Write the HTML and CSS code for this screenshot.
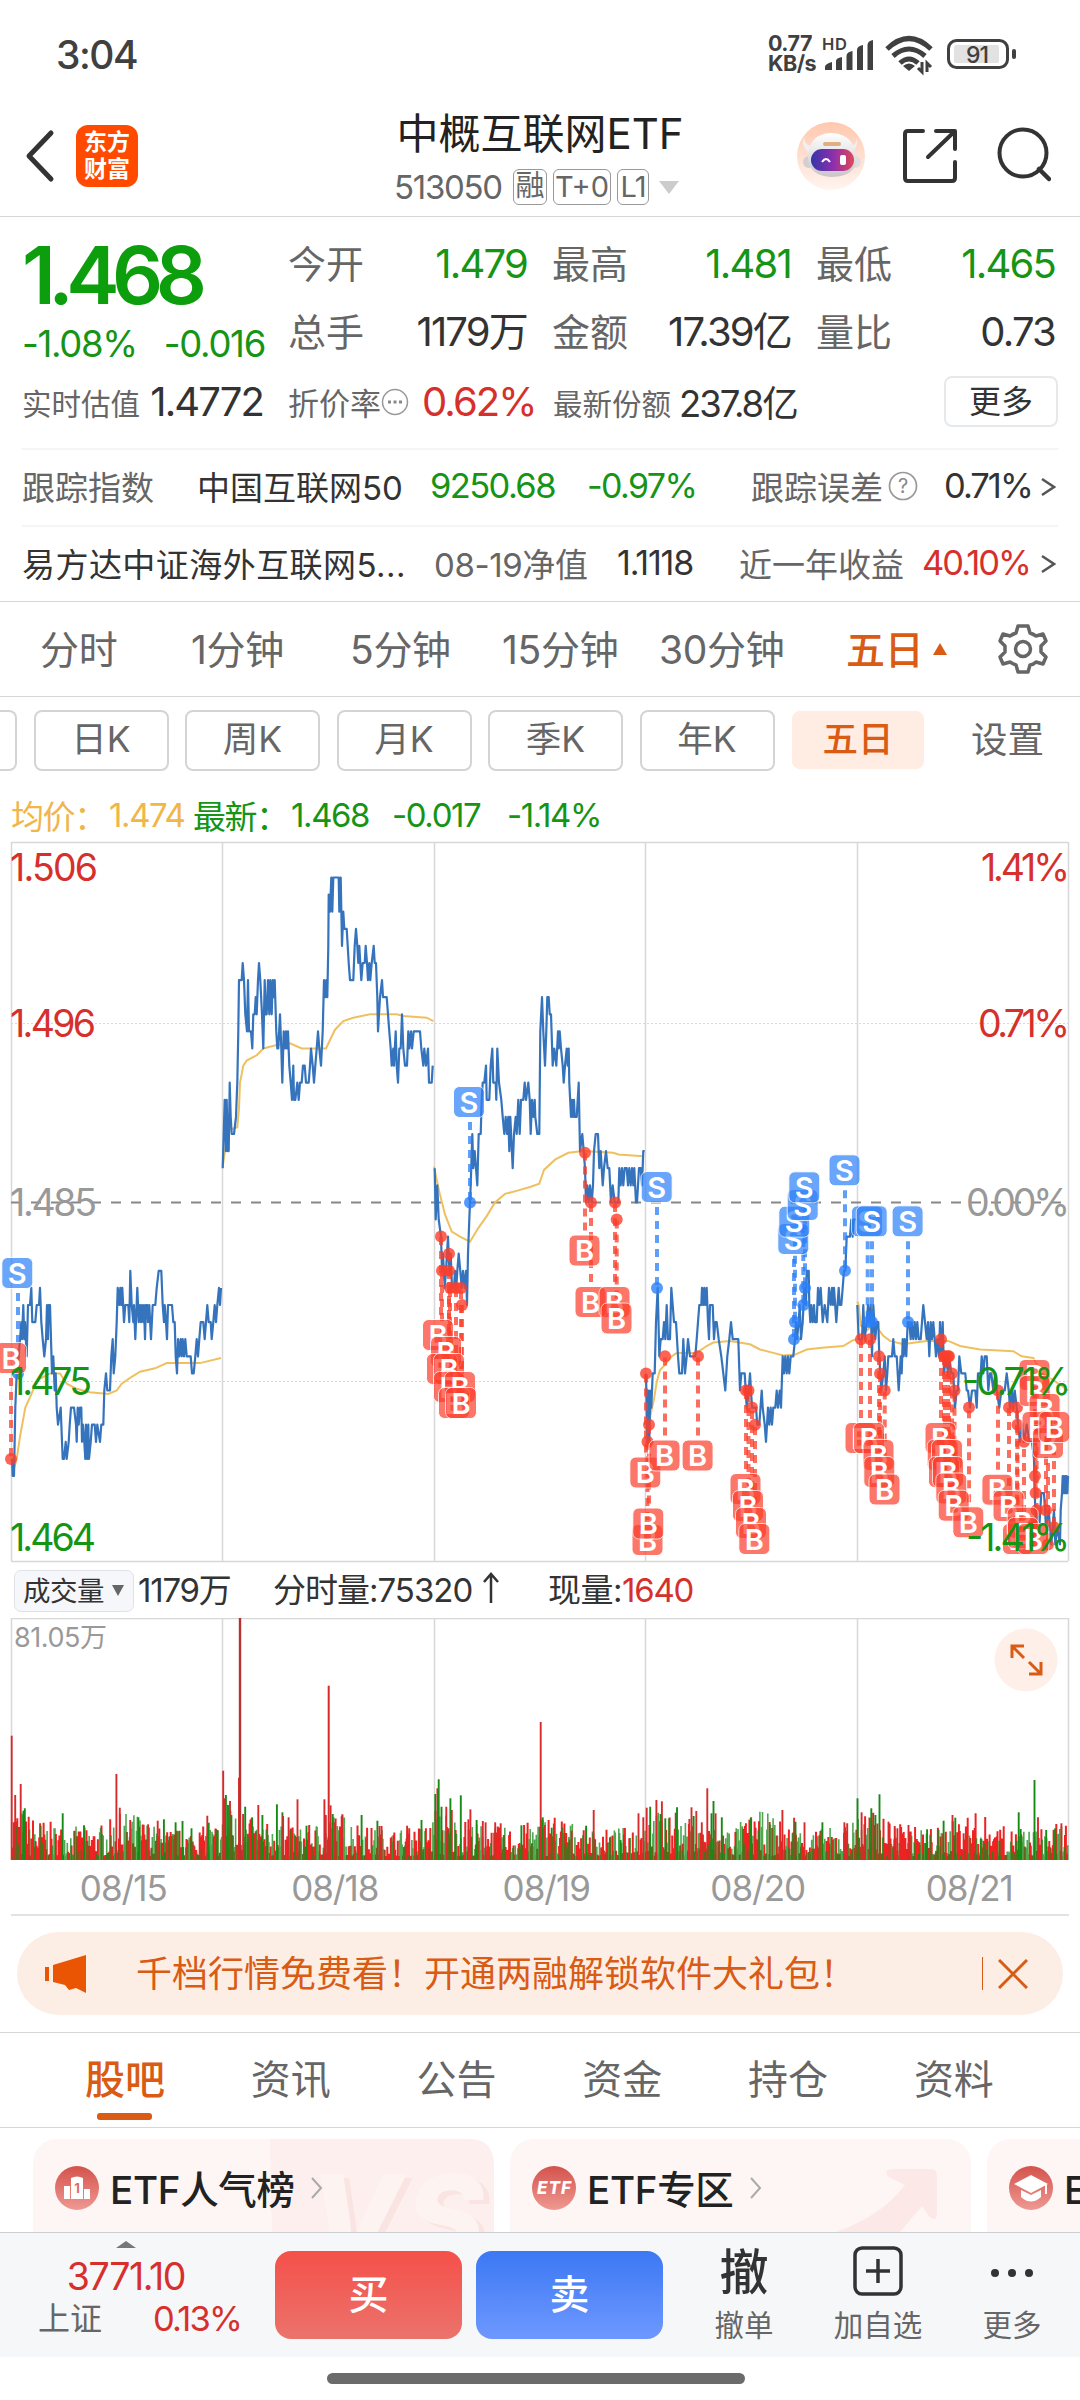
FILE: index.html
```html
<!DOCTYPE html>
<html lang="zh-CN">

<head>
    <meta charset="UTF-8">
    <meta name="viewport" content="width=device-width, initial-scale=1.0">
    <title>中概互联网ETF</title>
    <link rel="stylesheet" href="styles.css">
</head>

<body>
    <div class="status">
        <span class="clock">3:04</span>
        <div class="speed"><span>0.77</span><span>KB/s</span></div>
        <svg class="status-icons" width="200" height="44" viewBox="820 32 200 44">
            <text x="822" y="50" font-size="16.500" font-weight="600" textLength="25" fill="#404040">HD</text>
            <g fill="#404040">
                <path d="M825 76v-3q0-3 7-5v8zM836 76v-9q0-3 6-4v13zM846.500 76v-14q0-4 6-5v19zM857 76v-20q0-4 6-5v25zM867.500 76v-25q0-4 5.500-5v30z" transform="translate(0 -6)" />
            </g>
            <g fill="none" stroke="#404040" stroke-width="5">
                <path d="M887 49q22-21 44 0M893 56q16-14 32 0M900 63q9-8 18 0" />
            </g>
            <path d="M909 71l-6-5q6-5 12 0z" fill="#404040" />
            <path d="M922 62v10l-4-4M927 72v-9l4 4" fill="none" stroke="#404040" stroke-width="3" />
            <rect x="948.500" y="40.500" width="59" height="27" rx="8" fill="#fff" stroke="#404040" stroke-width="3" />
            <rect x="954" y="45" width="45" height="18" rx="2" fill="#e2e2e2" />
            <rect x="1012" y="49" width="4" height="10" rx="2" fill="#404040" />
            <text x="966" y="62.500" font-size="23" font-weight="500" textLength="23" fill="#404040">91</text>
        </svg>
    </div>

    <header class="header">
        <svg class="back" width="30" height="54" viewBox="0 0 30 54"><path d="M26 4L4 27l22 23" fill="none" stroke="#333" stroke-width="5" stroke-linecap="round" stroke-linejoin="round" /></svg>
        <div class="logo"><span>东方</span><span>财富</span></div>
        <div class="title">
            <div class="name">中概互联网<span>ETF</span></div>
            <div class="code"><span class="code-num">513050</span><i>融</i><i class="t0">T+0</i><i class="l1">L1</i><b class="down"></b></div>
        </div>
        <svg class="robot" width="68" height="68" viewBox="0 0 68 68">
            <defs>
                <linearGradient id="halo" x1="0" y1="0" x2="0" y2="1"><stop offset="0" stop-color="#ffc8ae" /><stop offset="1" stop-color="#fff5f0" /></linearGradient>
                <linearGradient id="visor" x1="0" y1="0" x2="1" y2="0"><stop offset="0" stop-color="#3535a8" /><stop offset=".5" stop-color="#8a2fae" /><stop offset="1" stop-color="#e04858" /></linearGradient>
                <linearGradient id="shell" x1="0" y1="0" x2="0" y2="1"><stop offset="0" stop-color="#fff" /><stop offset="1" stop-color="#c9c5cb" /></linearGradient>
            </defs>
            <circle cx="34" cy="34" r="34" fill="url(#halo)" />
            <path d="M14 24q-7-2-7-9q-4 10 6 16zM54 24q7-2 5-10q4 10-5 16z" fill="#f3eef0" />
            <circle cx="12" cy="40" r="6" fill="#d3ced3" /><circle cx="58" cy="40" r="6" fill="#e2dcdf" />
            <path d="M11 36Q11 12 34 11Q58 12 59 36Q60 54 35 55Q12 54 11 36z" fill="url(#shell)" />
            <rect x="14" y="27" width="43" height="22" rx="11" fill="url(#visor)" />
            <rect x="26" y="20" width="18" height="4" rx="2" fill="#dfae83" />
            <path d="M25 40q4-6 8 0" fill="none" stroke="#fff" stroke-width="2" /><rect x="43" y="33" width="6" height="10" rx="2" fill="#fff" />
        </svg>
        <svg class="share" width="54" height="54" viewBox="0 0 54 54"><path d="M20 2H5q-3 0-3 3v44q0 3 3 3h44q3 0 3-3V33M33 2h19v18M51 3L25 28" fill="none" stroke="#333" stroke-width="4" stroke-linecap="round" stroke-linejoin="round" /></svg>
        <svg class="search" width="54" height="56" viewBox="0 0 54 56"><circle cx="26" cy="26" r="23.500" fill="none" stroke="#333" stroke-width="4" /><path d="M42 42l10 10" stroke="#333" stroke-width="4.500" stroke-linecap="round" /></svg>
    </header>

    <section class="quote">
        <div class="quote-top">
            <div class="price">
                <div class="big">1.468</div>
                <div class="change"><span>-1.08%</span><span>-0.016</span></div>
            </div>
            <dl class="stats">
                <dt>今开</dt><dd class="green">1.479</dd><dt>最高</dt><dd class="green">1.481</dd><dt>最低</dt><dd class="green">1.465</dd>
                <dt>总手</dt><dd>1179万</dd><dt>金额</dt><dd>17.39亿</dd><dt>量比</dt><dd>0.73</dd>
            </dl>
        </div>
        <div class="estimate">
            <span class="lab">实时估值</span><span class="val">1.4772</span>
            <span class="lab rate">折价率<svg width="28" height="28" viewBox="0 0 28 28"><circle cx="14" cy="14" r="12.500" fill="none" stroke="#999" stroke-width="1.500" /><path d="M7 14h3M12.500 14h3M18 14h3" stroke="#888" stroke-width="3" /></svg></span><span class="val red">0.62%</span>
            <span class="lab">最新份额</span><span class="val">237.8亿</span>
            <button class="more">更多</button>
        </div>
        <div class="row index-row">
            <span class="grey">跟踪指数</span><span>中国互联网50</span><span class="green n1">9250.68</span><span class="green n2">-0.97%</span>
            <span class="grey">跟踪误差</span><svg width="30" height="30" viewBox="0 0 30 30"><circle cx="15" cy="15" r="13.500" fill="none" stroke="#999" stroke-width="1.700" /><text x="15" y="22" text-anchor="middle" font-size="20" fill="#888">?</text></svg><span class="n3">0.71%</span><svg class="gt" width="16" height="20" viewBox="0 0 16 20"><path d="M2 2l12 8-12 8" fill="none" stroke="#555" stroke-width="2.500" /></svg>
        </div>
        <div class="row fund-row">
            <span class="fund">易方达中证海外互联网5...</span><span class="grey nav">08-19净值</span><span class="n4">1.1118</span><span class="grey">近一年收益</span><span class="red n5">40.10%</span><svg class="gt" width="16" height="20" viewBox="0 0 16 20"><path d="M2 2l12 8-12 8" fill="none" stroke="#555" stroke-width="2.500" /></svg>
        </div>
    </section>

    <nav class="tabs">
        <span>分时</span><span>1分钟</span><span>5分钟</span><span>15分钟</span><span>30分钟</span><span class="on">五日</span><b class="up"></b>
        <svg width="50" height="52" viewBox="-25 -26 50 52"><path d="M-5-23H5L7-16Q10-15 13-13L20-15 23-8 18-3V3L23 8 20 15 13 13Q10 16 7 16L5 23H-5L-7 16Q-10 15-13 13L-20 15-23 8-18 3V-3L-23-8-20-15-13-13Q-10-15-7-16Z" fill="none" stroke="#666" stroke-width="3.500" stroke-linejoin="round" /><circle r="7.500" fill="none" stroke="#666" stroke-width="3.500" /></svg>
    </nav>
    <nav class="periods">
        <span class="cut"></span><span>日K</span><span>周K</span><span>月K</span><span>季K</span><span>年K</span><span class="on">五日</span><span class="set">设置</span>
    </nav>

    <div class="legend"><span class="avg">均价：</span><span class="avg">1.474</span><span>最新：</span><span>1.468</span><span>-0.017</span><span>-1.14%</span></div>

    <svg class="chart" id="chart" width="1080" height="722" viewBox="0 841 1080 722">
        <g class="frame">
            <path d="M11 842.500H1068M11 1561.500H1068M11.500 842V1561M222.500 842V1561M434.500 842V1561M645.500 842V1561M857.500 842V1561M1068.500 842V1561" />
            <path class="dots" d="M11 1023.500H1068M11 1381.500H1068" />
        </g>
        <path class="zero" d="M11 1202.500H1068" />
        <g id="lines"></g>
        <g id="marks"></g>
        <g class="axis">
            <text class="r" x="10" y="881" textLength="88">1.506</text>
            <text class="r" x="10" y="1037" textLength="86">1.496</text>
            <text class="z" x="10" y="1216" textLength="87">1.485</text>
            <text class="g" x="10" y="1395" textLength="82">1.475</text>
            <text class="g" x="10" y="1551" textLength="86">1.464</text>
            <text class="r" x="981" y="881" textLength="89">1.41%</text>
            <text class="r" x="978" y="1037" textLength="92">0.71%</text>
            <text class="z" x="966" y="1216" textLength="104">0.00%</text>
            <text class="g" x="962" y="1395" textLength="109">-0.71%</text>
            <text class="g" x="966" y="1551" textLength="104">-1.41%</text>
        </g>
    </svg>

    <div class="vol-head">
        <span class="select">成交量<b class="tri"></b></span><span class="total">1179万</span><span class="minute">分时量:75320<svg width="20" height="32" viewBox="0 0 20 32"><path d="M10 31V2M3 10l7-8 7 8" fill="none" stroke="#333" stroke-width="2.500" /></svg></span><span class="now">现量:<em class="red">1640</em></span>
    </div>
    <svg class="volume" width="1080" height="243" viewBox="0 1618 1080 243">
        <g class="frame"><path d="M11 1618.500H1068M11.500 1618V1860M222.500 1618V1860M434.500 1618V1860M645.500 1618V1860M857.500 1618V1860M1068.500 1618V1860" /></g>
        <g id="bars"></g>
        <text x="14" y="1647" font-size="27" textLength="93" fill="#999">81.05万</text>
        <circle cx="1026" cy="1660" r="31.500" fill="#fef0e8" />
        <path d="M1012 1658v-12h12M1012 1646l12 12M1041 1662v12h-12M1041 1674l-12-12" fill="none" stroke="#d95b14" stroke-width="3" />
    </svg>
    <div class="dates"><span>08/15</span><span>08/18</span><span>08/19</span><span>08/20</span><span>08/21</span></div>

    <div class="banner">
        <svg width="44" height="38" viewBox="0 0 44 38"><path d="M1 12h4v14H1zM9 10L42 0v38l-10-5-7 2-4-5-12-3z" fill="#ea5504" /></svg>
        <span>千档行情免费看！开通两融解锁软件大礼包！</span>
        <b></b>
        <svg width="30" height="30" viewBox="0 0 30 30"><path d="M1 1l28 28M29 1L1 29" stroke="#d95b14" stroke-width="3" /></svg>
    </div>

    <nav class="sections"><span class="on">股吧</span><span>资讯</span><span>公告</span><span>资金</span><span>持仓</span><span>资料</span></nav>

    <div class="cards">
        <div class="card">
            <svg class="mark" width="224" height="94" viewBox="0 0 224 94"><path d="M0 0H200Q224 0 224 28V94H2z" fill="#fdefed" /><text x="44" y="126" font-size="120" font-weight="800" font-style="italic" textLength="176" fill="#fae4e2">VS</text><text x="38" y="122" font-size="120" font-weight="800" font-style="italic" textLength="176" fill="#fdf3f1">VS</text></svg>
            <svg class="ico" width="44" height="44" viewBox="0 0 44 44"><circle cx="22" cy="22" r="22" fill="url(#badge)" /><path d="M9 20h6v13H9zM16 12q6-3 12 0v21H16zM29 23h6v10h-6z" fill="#fff" /><text x="22" y="27" text-anchor="middle" font-size="13" font-weight="700" fill="#e06c66">1</text>
                <defs><linearGradient id="badge" x1="0" y1="0" x2="0" y2="1"><stop offset="0" stop-color="#d3534c" /><stop offset="1" stop-color="#ef9892" /></linearGradient></defs>
            </svg>
            <span>ETF人气榜</span>
            <svg class="chev" width="14" height="24" viewBox="0 0 14 24"><path d="M2 2l9 10-9 10" fill="none" stroke="#aaa" stroke-width="2" /></svg>
        </div>
        <div class="card">
            <svg class="mark" width="150" height="94" viewBox="0 0 150 94"><path d="M12 94Q60 78 84 46L68 38Q61 31 72 30H110Q116 30 116 37V76Q114 84 108 77L101 67L78 94z" fill="#fce9e7" /></svg>
            <svg class="ico" width="44" height="44" viewBox="0 0 44 44"><circle cx="22" cy="22" r="22" fill="url(#badge)" /><text x="5" y="28" font-size="17" font-weight="800" font-style="italic" textLength="34" fill="#fff">ETF</text></svg>
            <span>ETF专区</span>
            <svg class="chev" width="14" height="24" viewBox="0 0 14 24"><path d="M2 2l9 10-9 10" fill="none" stroke="#aaa" stroke-width="2" /></svg>
        </div>
        <div class="card">
            <svg class="ico" width="44" height="44" viewBox="0 0 44 44"><circle cx="22" cy="22" r="22" fill="url(#badge)" /><path d="M5 18L22 9l17 9-17 9zM12 24l10 5 10-5v7q-10 9-20 0zM36 19h2v9h-2z" fill="#fff" /></svg>
            <span>ETF学堂</span>
        </div>
    </div>

    <footer class="bar">
        <div class="market"><b class="up-grey"></b><div class="point">3771.10</div><div class="sh"><span>上证</span><em>0.13%</em></div></div>
        <button class="buy">买</button>
        <button class="sell">卖</button>
        <div class="act"><strong>撤</strong><span>撤单</span></div>
        <div class="act act-add"><svg width="50" height="50" viewBox="0 0 50 50"><rect x="2" y="2" width="46" height="46" rx="7" fill="none" stroke="#333" stroke-width="3.500" /><path d="M25 13v24M13 25h24" stroke="#333" stroke-width="3.500" /></svg><span>加自选</span></div>
        <div class="act act-more"><svg width="50" height="50" viewBox="0 0 50 50"><g fill="#333"><circle cx="8" cy="27" r="4" /><circle cx="25" cy="27" r="4" /><circle cx="42" cy="27" r="4" /></g></svg><span>更多</span></div>
    </footer>
    <div class="home"></div>

    <script src="chart.js"></script>
</body>

</html>
```
FILE: styles.css
```css
body {
    width: 1080px;
    height: 2400px;
    margin: 0;
    overflow: hidden;
    background: #fff;
    color: #333;
    font-family: Inter, "Noto Sans CJK SC", sans-serif;
    white-space: nowrap;
}

svg {
    display: block;
    flex: none;
}

i, em {
    font-style: normal;
}

.green { color: #159415; }
.red { color: #d6302d; }
.grey { color: #666; }

/* status bar */
.status {
    display: flex;
    height: 108px;
    box-sizing: border-box;
    padding: 33px 0 0 56px;
}

.clock {
    width: 712px;
    font-size: 39px;
    font-weight: 500;
    line-height: 44px;
    letter-spacing: -1.500px;
    color: #404040;
}

.speed {
    display: flex;
    flex-direction: column;
    width: 52px;
    padding-top: 1px;
    font-size: 21.500px;
    font-weight: 700;
    line-height: 19.500px;
    letter-spacing: -0.500px;
    color: #404040;
}

.status-icons { margin-top: -1px; }

/* header */
.header {
    display: flex;
    height: 109px;
    box-sizing: border-box;
    border-bottom: 1px solid #d6d6d6;
}

.back {
    margin: 21px 21px 0 25px;
}

.logo {
    display: flex;
    flex-direction: column;
    align-items: center;
    justify-content: center;
    width: 62px;
    height: 62px;
    margin-top: 17px;
    border-radius: 12px;
    background: #ff4a00;
    color: #fff;
    font-size: 23px;
    font-weight: 700;
    line-height: 27px;
}

.title {
    width: 404px;
    margin-left: 200px;
    text-align: center;
}

.name {
    height: 60px;
    font-size: 42px;
    line-height: 52px;
    color: #222;
}

.code {
    display: flex;
    align-items: center;
    height: 38px;
    padding-left: 56px;
    font-size: 33px;
    color: #666;
}

.code-num {
    width: 119px;
    text-align: left;
    letter-spacing: -1.300px;
}

.code i {
    width: 32px;
    height: 34px;
    margin-right: 6px;
    border: 1.500px solid #999;
    border-radius: 6px;
    font-size: 29px;
    line-height: 32px;
}

.code .t0 {
    width: 56px;
    line-height: 34px;
}

.code .l1 {
    width: 30px;
    line-height: 34px;
    letter-spacing: -1px;
}

.down {
    margin-left: 4px;
    border: 10px solid transparent;
    border-top: 13px solid #ccc;
    border-bottom: 0;
}

.robot { margin: 14px 0 0 55px; }
.share { margin: 21px 0 0 38px; }
.search { margin: 19px 0 0 40px; }

/* quote */
.quote {
    height: 384px;
    border-bottom: 1px solid #d6d6d6;
}

.quote-top {
    display: flex;
    height: 152px;
    padding-top: 6px;
}

.price {
    width: 266px;
    padding-left: 22px;
}

.big {
    height: 91px;
    padding-top: 10px;
    box-sizing: border-box;
    font-size: 80px;
    font-weight: 600;
    line-height: 84px;
    letter-spacing: -7.500px;
    color: #0c9e0c;
}

.change {
    display: flex;
    justify-content: space-between;
    width: 243px;
    margin-top: 8px;
    font-size: 36.500px;
    line-height: 44px;
    letter-spacing: -1.300px;
    color: #159415;
}

.stats {
    display: grid;
    grid-template-columns: 80px 159px 80px 184px 80px 184px;
    grid-template-rows: 68px 70px;
    margin: 0;
    padding-top: 7px;
}

.stats dt {
    font-size: 38px;
    line-height: 68px;
    color: #666;
}

.stats dd {
    margin: 0;
    font-size: 40px;
    line-height: 68px;
    letter-spacing: -1.800px;
    text-align: right;
}

.stats dt:nth-of-type(3n+2),
.stats dt:nth-of-type(3n) {
    padding-left: 25px;
}

.estimate {
    display: grid;
    grid-template-columns: 124px 117px 25px 134px 106px 25px 126px 113px;
    align-items: center;
    height: 52px;
    padding: 0 0 22px 22px;
    margin-bottom: -1px;
}

.estimate .lab {
    font-size: 29.500px;
    color: #666;
}

.estimate .val {
    font-size: 40px;
    letter-spacing: -1.900px;
    text-align: right;
}

.estimate .rate {
    display: flex;
    align-items: center;
    grid-column: 4;
    font-size: 31px;
}

.estimate .lab:nth-of-type(5) { grid-column: 7; }

.estimate .val:nth-of-type(6) {
    font-size: 36.500px;
    letter-spacing: -2px;
}

.more {
    grid-column: 9;
    width: 114px;
    height: 51px;
    margin-left: 152px;
    border: 2px solid #e6e9ec;
    border-radius: 8px;
    background: #fff;
    color: #333;
    font: 32px/44px Inter, "Noto Sans CJK SC", sans-serif;
}

.row {
    display: grid;
    align-items: center;
    height: 71px;
    margin: 0 22px;
    padding-bottom: 4px;
    border-top: 2px solid #f4f5f6;
    font-size: 33px;
}

.index-row {
    grid-template-columns: 175px 233px 157px 164px 137px 40px 112px 20px;
    margin-top: -1px;
}

.fund-row {
    grid-template-columns: 412px 183px 122px 173px 128px 20px;
}

.n1 { font-size: 34.500px; letter-spacing: -1.600px; }
.n2 { font-size: 34px; letter-spacing: -1.600px; }
.n3, .n5 { font-size: 34.500px; letter-spacing: -2px; }
.n3 { padding-left: 16px; }
.n4 { font-size: 34px; letter-spacing: -1.200px; }
.n5 { padding-left: 10px; }
.fund { letter-spacing: 0.450px; }
.nav { letter-spacing: -0.400px; }
.gt { margin-top: 3px; }

/* chart tabs */
.tabs {
    display: grid;
    grid-template-columns: 151px 159px 152px 157px 187px 87px 65px 52px;
    align-items: center;
    height: 94px;
    padding-left: 40px;
    border-bottom: 1px solid #d6d6d6;
    font-size: 39px;
    color: #666;
    letter-spacing: -0.300px;
}

.tabs span {
    padding-bottom: 5px;
}

.tabs .on,
.periods .on {
    color: #d95b14;
    font-weight: 500;
}

.up {
    width: 0;
    border: 7px solid transparent;
    border-bottom: 12px solid #d95b14;
    border-top: 0;
}

.periods {
    display: flex;
    gap: 16.500px;
    height: 62px;
    padding-top: 13px;
}

.periods span {
    width: 135px;
    height: 61px;
    box-sizing: border-box;
    border: 2px solid #d4d4d4;
    border-radius: 8px;
    font-size: 35.500px;
    line-height: 56px;
    text-align: center;
    color: #666;
}

.periods .cut {
    width: 17px;
    border-left: 0;
    border-radius: 0 8px 8px 0;
}

.periods .on {
    width: 132px;
    height: 58px;
    margin: 1px 0 0 1px;
    border-color: #ffece2;
    background: #ffece2;
    line-height: 53px;
}

.periods .set {
    width: 104px;
    margin-left: 15px;
    border: 0;
    font-size: 36.500px;
    line-height: 60px;
}

.legend {
    display: grid;
    grid-template-columns: 98px 84px 98px 101px 115px 110px;
    align-items: center;
    height: 69px;
    padding: 16px 0 0 11px;
    box-sizing: border-box;
    font-size: 33px;
    letter-spacing: -1.400px;
    color: #159415;
}

.legend .avg { color: #f0b64a; }

/* price chart */
.frame path {
    fill: none;
    stroke: #d8d8d8;
    stroke-width: 1.500;
}

.frame .dots {
    stroke-dasharray: 2 2;
    stroke-width: 1;
}

.zero {
    fill: none;
    stroke: #888;
    stroke-width: 2;
    stroke-dasharray: 10 10;
}

.day {
    fill: none;
    stroke: #3574bd;
    stroke-width: 2.200;
    stroke-linejoin: round;
}

.mean {
    fill: none;
    stroke: #efc060;
    stroke-width: 2;
}

.axis { font-size: 37.500px; }
.axis .r { fill: #d6302d; }
.axis .z { fill: #999; }
.axis .g { fill: #159415; }

.sign rect {
    stroke: #fff;
    stroke-width: 1;
    opacity: 0.700;
}

.sign text {
    font-size: 29px;
    font-weight: 600;
    text-anchor: middle;
    fill: #fff;
}

.stem {
    stroke-width: 4;
    stroke-dasharray: 8 6;
    opacity: 0.750;
}

.dot { opacity: 0.800; }

/* volume */
.vol-head {
    display: flex;
    align-items: center;
    height: 55px;
    padding-left: 14px;
    font-size: 33px;
    letter-spacing: -0.500px;
}

.select {
    display: flex;
    align-items: center;
    justify-content: space-between;
    width: 101px;
    height: 40px;
    padding: 0 9px 0 8px;
    margin-right: 4px;
    border: 1px solid #dfe2e8;
    border-radius: 7px;
    background: #f6f7fa;
    font-size: 27.500px;
    line-height: 36px;
}

.tri {
    border: 6.500px solid transparent;
    border-top: 11px solid #666;
    border-bottom: 0;
}

.total { width: 135px; padding-bottom: 5px; letter-spacing: -1.200px; }
.minute { display: flex; align-items: center; width: 275px; padding-bottom: 5px; letter-spacing: -1px; }
.minute svg { margin-left: 9px; }
.now { padding-bottom: 5px; }
.now em { letter-spacing: -1.200px; }

.dates {
    display: grid;
    grid-template-columns: repeat(5, 211.500px);
    height: 53px;
    margin: 0 11px;
    border-bottom: 2px solid #e2e2e2;
    font-size: 35px;
    line-height: 55px;
    letter-spacing: -1px;
    text-align: center;
    color: #999;
}

.dates span { padding-left: 13px; }

/* banner */
.banner {
    display: flex;
    align-items: center;
    width: 1046px;
    height: 83px;
    margin: 16px 17px 17px;
    border-radius: 42px;
    background: #fceee5;
    font-size: 36px;
    color: #d95b14;
}

.banner span { padding-bottom: 5px; }
.banner svg:first-child { margin: 0 48px 0 27px; }
.banner b { width: 1px; height: 33px; margin: 0 15px 0 auto; background: #d95b14; }
.banner svg:last-child { margin-right: 35px; }

.sections {
    display: flex;
    height: 94px;
    padding-left: 42px;
    border-top: 1px solid #d6d6d6;
    border-bottom: 1px solid #d6d6d6;
    font-size: 40px;
    line-height: 93px;
    color: #666;
}

.sections span {
    position: relative;
    width: 165.800px;
    text-align: center;
}

.sections .on {
    color: #d95b14;
    font-weight: 500;
}

.sections .on::after {
    content: "";
    position: absolute;
    left: 55px;
    bottom: 7px;
    width: 55px;
    height: 7px;
    border-radius: 3px;
    background: #d95b14;
}

.cards {
    display: flex;
    gap: 16px;
    height: 93px;
    padding: 11px 0 0 33px;
    overflow: hidden;
}

.card {
    position: relative;
    display: flex;
    flex: none;
    align-items: center;
    width: 461px;
    height: 150px;
    box-sizing: border-box;
    padding: 0 0 52px 22px;
    border-radius: 24px;
    background: #fef6f4;
    font-size: 38.500px;
    font-weight: 500;
    color: #222;
}

.card .mark {
    position: absolute;
    top: 0;
    right: 0;
}

.card .ico, .card span, .chev { position: relative; }
.card span { margin: -3px 15px 0 11px; letter-spacing: -0.300px; }

/* trade bar */
.bar {
    display: flex;
    height: 125px;
    box-sizing: border-box;
    border-top: 1px solid #ccd0d4;
    background: #f6f7f9;
    overflow: hidden;
}

.market {
    display: flex;
    flex-direction: column;
    align-items: center;
    width: 252px;
    margin-right: 23px;
}

.up-grey {
    margin: 8px 0 4px;
    border: 10px solid transparent;
    border-bottom: 7px solid #777;
    border-top: 0;
}

.point {
    height: 47px;
    font-size: 37.500px;
    line-height: 49px;
    letter-spacing: -1.400px;
    color: #d6302d;
}

.sh {
    display: flex;
    justify-content: space-between;
    width: 203px;
    margin-left: 27px;
    font-size: 32px;
    line-height: 40px;
    color: #666;
}

.sh em {
    font-size: 34.500px;
    letter-spacing: -1.800px;
    color: #d6302d;
}

.bar button {
    width: 187px;
    height: 88px;
    margin: 18px 14px 0 0;
    padding: 0;
    border: 0;
    border-radius: 16px;
    background: linear-gradient(#f5504a, #eb736c);
    color: #fff;
    font: 500 40px/82px Inter, "Noto Sans CJK SC", sans-serif;
}

.bar .sell { background: linear-gradient(#3c78f4, #6e98ff); }

.act {
    display: flex;
    flex-direction: column;
    align-items: center;
    width: 110px;
    margin-left: 12px;
    padding-top: 13px;
    font-size: 29.500px;
    color: #666;
}

.act strong {
    height: 52px;
    font-size: 49px;
    font-weight: 500;
    line-height: 54px;
    color: #333;
}

.act svg { margin-bottom: 2px; }
.act span { line-height: 54px; }
.act-add { margin-left: 24px; }
.act-more { margin-left: 24px; }

.home {
    width: 418px;
    height: 11px;
    margin: 16px 0 0 327px;
    border-radius: 6px;
    background: #6b6b6b;
}
```
FILE: chart.js
```javascript
var NS = 'http://www.w3.org/2000/svg';

function add(parent, tag, attrs, text) {
    var el = document.createElementNS(NS, tag);
    for (var k in attrs) el.setAttribute(k, attrs[k]);
    if (text) el.textContent = text;
    parent.appendChild(el);
    return el;
}

// level = thousandths above/below the 1.485 close
function py(level) {
    return 1202.4 - level * 17.1;
}

// each day: left edge, then "x,level" pairs in thirds of a pixel
var days = [
    [0, '36,-15 38,-16 42,-16 46,-12 50,-10 56,-9 60,-8 64,-7 66,-8 70,-6 73,-8 75,-7 80,-9 84,-6 90,-6 94,-5 97,-7 106,-7 110,-6 117,-6 120,-5 124,-7 128,-8 133,-9 138,-8 141,-6 144,-8 146,-6 150,-6 153,-8 156,-10 160,-9 164,-11 167,-10 170,-12 174,-13 182,-12 186,-14 188,-15 192,-15 197,-14 200,-15 206,-14 209,-13 213,-12 222,-12 228,-13 230,-14 233,-12 236,-13 240,-12 244,-12 246,-14 249,-13 253,-14 256,-15 258,-13 262,-15 265,-13 267,-15 272,-14 276,-13 284,-13 288,-14 292,-13 300,-14 304,-13 310,-13 313,-11 318,-10 322,-11 330,-11 334,-9 338,-8 341,-10 346,-9 350,-7 353,-5 358,-6 361,-5 364,-6 367,-5 372,-7 376,-6 385,-6 388,-7 391,-4 395,-6 400,-7 402,-6 406,-8 412,-5 416,-7 420,-6 423,-7 426,-6 430,-7 432,-6 435,-8 438,-6 442,-6 444,-7 448,-6 453,-8 458,-6 466,-6 470,-5 476,-4 484,-4 488,-6 492,-7 494,-6 498,-7 501,-8 504,-6 516,-6 520,-7 524,-7 527,-9 531,-10 534,-8 538,-9 542,-8 545,-9 548,-8 552,-9 556,-8 560,-9 572,-9 576,-10 581,-10 586,-9 590,-8 594,-9 598,-8 602,-7 610,-7 614,-8 618,-7 622,-6 626,-7 632,-7 635,-8 640,-7 644,-6 648,-7 652,-6 657,-5 660,-6 663,-5'],
    [0, '668,2 671,4 674,6 678,3 680,6 683,3 686,3 689,7 692,5 695,4 702,4 708,5 712,7 715,10 717,13 725,13 728,14 732,13 736,11 741,10 744,13 747,10 753,10 757,9 760,11 764,11 767,12 770,11 774,13 777,14 781,13 786,11 790,9 794,13 797,11 800,11 804,13 808,11 811,13 815,11 818,13 821,12 824,13 829,10 832,9 835,9 840,11 844,9 847,7 851,10 855,9 858,10 861,9 864,10 868,8 872,7 876,6 880,8 882,6 886,6 892,7 896,6 900,7 905,7 909,8 914,8 918,7 926,7 930,8 933,9 938,8 942,7 946,8 950,9 954,10 958,9 963,8 968,10 972,13 976,12 979,13 982,12 985,15 986,18 990,17 994,19 997,17 1000,19 1016,19 1018,17 1022,19 1026,15 1030,17 1033,16 1040,16 1043,15 1046,14 1050,13 1060,13 1064,15 1068,16 1072,15 1075,14 1078,15 1084,13 1088,14 1094,14 1097,15 1101,14 1104,13 1108,14 1111,13 1115,14 1121,15 1124,14 1128,14 1132,12 1134,10 1140,12 1146,13 1149,12 1160,12 1164,11 1168,10 1172,9 1175,8 1180,9 1182,8 1187,10 1190,8 1194,7 1198,9 1202,9 1206,11 1210,9 1215,8 1221,8 1225,10 1228,9 1233,10 1236,9 1241,10 1260,10 1264,9 1270,8 1273,9 1278,8 1284,9 1287,7 1295,7 1298,8'],
    [430, '14,2 17,-1 22,1 26,-1 33,-2 36,-4 39,-3 44,-5 48,-4 54,-2 58,-4 62,-3 66,-5 72,-5 75,-4 79,-5 82,-4 86,-3 91,-4 95,-5 99,-4 104,-5 108,-4 111,-6 114,-3 118,-1 122,1 127,4 130,2 134,3 138,2 142,1 146,4 152,4 155,6 158,7 163,7 168,8 170,6 178,6 182,8 187,9 190,7 197,7 199,6 202,9 207,7 214,6 218,5 223,4 227,5 231,4 235,5 238,3 241,5 248,2 252,4 257,5 260,4 265,6 269,4 273,6 280,6 284,7 288,6 295,7 299,6 302,4 306,6 310,5 314,6 316,5 322,4 328,4 331,10 336,12 340,10 345,8 349,10 352,12 356,12 359,11 363,11 368,8 373,9 379,8 384,10 386,9 389,10 393,9 398,8 401,7 405,8 410,9 413,8 416,9 418,7 423,5 426,6 429,5 432,6 434,5 440,5 446,7 450,3 457,4 461,3 465,2 468,0 472,1 476,0 480,1 485,0 489,1 492,3 497,4 504,4 508,2 512,3 518,1 522,2 528,3 533,2 538,2 543,0 548,1 554,0 565,0 568,2 572,1 576,2 580,1 584,2 590,2 594,1 598,2 602,1 606,2 610,1 613,2 618,0 621,0 627,2 632,2 636,1 640,3 644,3'],
    [430, '648,-10 652,-14 655,-11 658,-14 661,-11 664,-12 668,-10 674,-10 678,-7 683,-5 688,-9 692,-8 698,-8 702,-7 706,-8 710,-6 714,-8 720,-8 724,-5 728,-6 732,-7 738,-7 744,-9 748,-10 756,-10 760,-8 765,-10 770,-9 774,-8 780,-9 796,-9 800,-8 804,-7 808,-6 814,-6 816,-5 820,-6 823,-5 826,-6 830,-5 834,-7 837,-8 840,-6 848,-6 852,-8 856,-7 860,-7 866,-8 874,-9 880,-10 886,-11 892,-9 898,-8 903,-7 908,-8 925,-8 930,-11 934,-10 944,-10 950,-12 956,-11 960,-10 966,-12 978,-12 982,-13 988,-13 995,-11 998,-12 1004,-13 1008,-14 1014,-12 1018,-13 1022,-12 1026,-13 1030,-12 1036,-12 1040,-11 1044,-12 1049,-11 1053,-12 1058,-9 1062,-10 1066,-9 1070,-10 1074,-9 1078,-10 1082,-9 1090,-9 1095,-8 1098,-7 1101,-8 1106,-7 1109,-6 1113,-8 1118,-7 1123,-5 1128,-6 1130,-4 1136,-4 1138,-6 1141,-7 1144,-6 1148,-7 1152,-6 1155,-7 1160,-7 1164,-5 1168,-6 1172,-5 1178,-7 1184,-6 1192,-7 1197,-5 1202,-6 1206,-5 1209,-6 1212,-5 1219,-7 1226,-5 1229,-6 1234,-6 1238,-5 1242,-4 1246,-4 1250,-2 1260,-2 1264,-1 1268,-2 1271,-1 1278,-1'],
    [740, '352,-6 356,-8 366,-8 370,-6 374,-8 380,-7 384,-6 388,-7 392,-6 396,-9 400,-6 406,-8 410,-7 415,-7 418,-9 424,-11 430,-10 434,-9 438,-11 442,-10 445,-9 456,-9 460,-8 464,-9 470,-9 476,-11 482,-9 485,-10 488,-8 491,-9 494,-8 499,-9 503,-7 508,-7 512,-8 515,-7 520,-8 524,-7 528,-8 532,-7 536,-8 542,-8 546,-7 550,-6 555,-7 560,-8 564,-7 568,-9 572,-7 576,-8 580,-7 584,-8 588,-9 592,-8 597,-9 600,-7 604,-9 608,-7 612,-10 618,-9 624,-10 628,-9 634,-10 640,-10 645,-12 650,-11 654,-11 658,-9 664,-10 676,-10 680,-11 684,-11 690,-12 696,-11 702,-11 706,-11 710,-12 714,-10 722,-10 725,-9 730,-10 734,-9 740,-9 745,-11 750,-10 754,-10 760,-11 766,-10 770,-11 778,-12 784,-11 794,-11 800,-10 806,-11 810,-12 816,-11 820,-12 824,-11 830,-12 834,-13 840,-14 846,-13 852,-14 860,-13 868,-14 876,-14 882,-15 884,-17 888,-19 892,-18 898,-19 904,-17 912,-17 918,-19 926,-18 934,-20 942,-18 946,-20 952,-19 960,-20 962,-18 966,-17 968,-16 970,-17 972,-16 974,-17 976,-16 978,-17 980,-16 982,-17 984,-16']
];

var means = [
    [0, '36,-16 50,-15 60,-13.7 76,-12 90,-11.4 105,-10.7 120,-10.3 150,-10 180,-10 200,-10.6 230,-10.9 270,-11.1 325,-11.2 350,-11 365,-10.6 395,-10.2 420,-9.9 465,-9.7 500,-9.4 600,-9.4 663,-9.1'],
    [0, '668,2.1 675,3 682,4.2 712,4.4 717,5.5 720,7 730,8 740,8.3 770,8.6 790,9 830,9.2 870,9.3 905,9 978,9 990,9.5 1005,10.1 1030,10.6 1060,10.8 1110,11 1190,11 1210,10.9 1280,10.8 1300,10.6'],
    [430, '12,2.1 28,.6 45,-.7 65,-1.7 90,-2 120,-2.3 145,-1.5 170,-.8 195,0 225,.5 265,.7 300,.9 328,1.1 342,1.9 375,2.5 415,2.9 460,3 550,2.9 565,2.8 640,2.7'],
    [430, '655,-13 672,-11.5 680,-10.5 690,-9.8 705,-9.5 725,-9 740,-8.8 800,-8.8 830,-8.4 850,-8.2 900,-8.1 960,-8.3 990,-8.6 1030,-8.8 1060,-8.95 1095,-8.9 1130,-8.6 1175,-8.5 1240,-8.4 1265,-8.1 1278,-8'],
    [740, '352,-5.8 356,-6 362,-7.2 380,-7.5 395,-7.2 410,-7.3 430,-7.8 450,-8.1 490,-8.3 525,-8.2 560,-8.1 625,-8.1 660,-8.4 720,-8.6 820,-8.7 845,-9 880,-9.1 905,-10 940,-10.4 985,-11']
];

function drawLines(list, cls) {
    var box = document.getElementById('lines');
    list.forEach(function (d) {
        var pts = d[1].split(' ').map(function (p) {
            var v = p.split(',');
            return (d[0] + v[0] / 3).toFixed(1) + ',' + py(+v[1]).toFixed(1);
        });
        add(box, 'polyline', { 'class': cls, points: pts.join(' ') });
    });
}

drawLines(means, 'mean');
drawLines(days, 'day');

// trades: side, dot x, dot level, badge x, badge y
var trades = [
    ['B', 11, -15, 11, 1358], ['S', 18, -10, 17.3, 1273],
    ['B', 441, -2, 438, 1335], ['B', 449, -3, 446, 1352], ['B', 442, -4, 442, 1369], ['B', 449, -4, 449, 1369],
    ['B', 450, -5, 449, 1387], ['B', 456, -5, 460, 1387], ['B', 461, -5, 454, 1403], ['B', 462, -6, 461, 1403],
    ['S', 470, 0, 469, 1102],
    ['B', 585, 2.9, 584.5, 1250.5], ['B', 591, 0, 590.5, 1302], ['B', 615, 0, 614.5, 1302], ['B', 616.7, -1, 616.5, 1318.5],
    ['B', 646, -10, 645.3, 1472.5], ['B', 647.5, -14, 647.5, 1540], ['B', 649, -13, 648.3, 1523.5], ['S', 657, -5, 656.7, 1187],
    ['B', 665, -9, 664.5, 1455.5], ['B', 698, -9, 697.6, 1455.5],
    ['B', 746, -11, 745.5, 1489], ['B', 748.5, -11, 748, 1506], ['B', 752, -12, 751, 1523], ['B', 755, -13, 754.3, 1539],
    ['S', 794, -8, 793.3, 1239], ['S', 795, -7, 794.3, 1221.7], ['S', 803.3, -6, 802.7, 1205], ['S', 805, -5, 804.3, 1187.3],
    ['S', 845, -4, 844.5, 1170.3], ['S', 867.7, -7, 867, 1221.3], ['S', 872, -7, 871.7, 1221.3], ['S', 908, -7, 907.6, 1221.3],
    ['B', 861, -8, 860.5, 1438], ['B', 870, -8, 869, 1438], ['B', 879, -9, 878.5, 1455], ['B', 880, -10, 879.3, 1472], ['B', 884.7, -11, 884.5, 1489.5],
    ['B', 941, -8, 940.5, 1438], ['B', 944, -9, 942.7, 1455], ['B', 948, -9, 947, 1455], ['B', 945, -9, 944, 1472], ['B', 949, -9, 948, 1472],
    ['B', 952, -10, 951.3, 1488.5], ['B', 954.5, -11, 953.7, 1505.7], ['B', 969, -12, 968.3, 1522.3],
    ['B', 998, -11, 997.4, 1489.7], ['B', 1009, -12, 1008.5, 1506], ['B', 1017.5, -13, 1018, 1539], ['B', 1017, -12, 1022.7, 1522.7], ['B', 1024, -14, 1023, 1533],
    ['B', 1035, -16, 1034.5, 1375], ['B', 1035.6, -17, 1034.7, 1391], ['B', 1046, -18, 1044.6, 1409], ['B', 1036.6, -18, 1037.5, 1427],
    ['B', 1048, -20, 1048, 1443], ['B', 1054, -19, 1054.3, 1427], ['B', 1033, -19, 1033.3, 1539]
];
var colors = { B: '#fb3e2b', S: '#2b80f8' };
var marks = document.getElementById('marks');

trades.forEach(function (t) {
    var c = colors[t[0]], y = py(t[2]);
    var edge = t[4] > y ? t[4] - 20 : t[4] + 20;
    add(marks, 'line', { 'class': 'stem', x1: t[1], x2: t[1], y1: edge, y2: y, stroke: c });
    add(marks, 'circle', { 'class': 'dot', cx: t[1], cy: y, r: 6, fill: c });
});
trades.forEach(function (t) {
    var g = add(marks, 'g', { 'class': 'sign' });
    add(g, 'rect', { x: t[3] - 15.5, y: t[4] - 15.5, width: 31, height: 31, rx: 6, fill: colors[t[0]] });
    add(g, 'text', { x: t[3], y: t[4] + 10.5 }, t[0]);
});

// volume: "x,top,color" for the tall bars, the rest is the usual churn
var tall = '17,527,r 22,705,r 30,672,r 34,752,g 36,745,g 91,760,g 122,796,g 169,642,r 174,743,r 189,780,r 201,772,g 215,793,r 229,782,r 238,778,g 255,787,g 265,783,g 278,805,g 301,767,r 303,788,g 324,632,r 326,715,r 328,705,g 334,723,r 331,735,g 336,765,g 347,653,r 353,762,r 356,740,g 366,772,g 375,735,r 381,765,g 402,733,g 410,757,g 411,768,r 419,772,r 432,718,r 445,797,g 471,718,r 473,765,r 480,736,r 483,762,g 486,787,r 497,763,r 525,765,g 548,782,g 551,798,r 554,798,r 591,797,r 612,780,g 632,702,g 635,685,r 637,658,g 641,740,g 648,740,r 654,715,g 656,750,r 669,706,g 680,778,r 683,748,r 692,780,g 701,783,r 705,787,r 719,787,r 727,790,r 757,796,g 785,486,r 788,772,g 791,795,r 801,803,g 830,812,r 851,797,g 862,750,r 901,840,g 927,760,r 934,772,r 939,743,r 944,740,g 953,720,r 959,762,g 961,724,r 966,775,g 981,758,r 983,742,g 1001,777,r 1004,742,r 1007,768,g 1011,753,r 1019,787,r 1027,685,r 1033,760,g 1036,723,g 1039,760,r 1048,772,g 1090,775,g 1097,803,r 1136,750,r 1153,773,r 1155,785,g 1168,787,r 1194,787,g 1226,787,r 1230,790,r 1245,715,g 1251,757,r 1255,793,r 1265,745,g 1268,758,r 1271,765,g 1277,703,g 1290,785,r 1299,798,r 1303,805,r 1319,795,r 1346,808,g 1370,782,g 1383,765,r 1387,773,g 1399,820,r 1424,837,g 1451,842,g 1479,757,g 1482,807,g 1502,660,g 1507,772,r 1519,810,g 1532,805,g 1541,790,r';
var bars = document.getElementById('bars');
var seed = 7;
function rnd() {
    seed = (seed * 16807) % 2147483647;
    return seed / 2147483647;
}
// busier at the open and at the afternoon restart
function busy(t) {
    return 26 + 30 * Math.exp(-t * 7) + 18 * Math.exp(-Math.pow((t - 0.55) * 9, 2)) + 14 * Math.exp(-(1 - t) * 14);
}
var shapes = { r: '', g: '' };
for (var d = 0; d < 5; d++) {
    for (var i = 0; i < 241; i++) {
        var h = 4 + Math.pow(rnd(), 1.5) * busy(i / 241);
        var key = rnd() < 0.58 ? 'r' : 'g';
        shapes[key] += 'M' + (12 + d * 211.3 + i * 0.877).toFixed(1) + ' 1860v-' + h.toFixed(1);
    }
}
add(bars, 'path', { d: shapes.r, stroke: '#ef2222', 'stroke-width': 2 });
add(bars, 'path', { d: shapes.g, stroke: '#158a15', 'stroke-width': 1.6, opacity: 0.75 });
tall.split(' ').forEach(function (s) {
    var v = s.split(',');
    var x = v[0] / 1.4519;
    add(bars, 'path', { d: 'M' + x.toFixed(1) + ' 1860V' + (1560 + v[1] / 3).toFixed(1), stroke: v[2] === 'r' ? '#d82a2a' : '#158a15', 'stroke-width': 1.9 });
});
add(bars, 'path', { d: 'M240 1860V1618', stroke: '#b93232', 'stroke-width': 2.4 });
add(bars, 'path', { d: 'M328.700 1860V1685.700', stroke: '#d82a2a', 'stroke-width': 2 });
```
